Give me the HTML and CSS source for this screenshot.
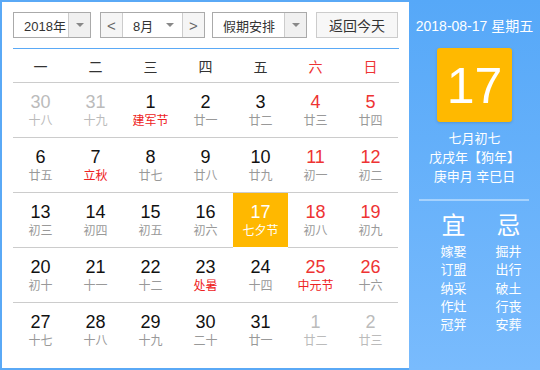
FILE: index.html
```html
<!DOCTYPE html>
<html lang="zh-CN">
<head>
  <meta charset="UTF-8" />
  <title>万年历</title>
  <link rel="stylesheet" href="styles.css">
</head>
<body>
  <div class="calendar">
    <div class="main">
      <div class="toolbar">
        <div class="select year">
          <span class="select-text">2018年</span>
          <span class="select-arrow"><i class="tri"></i></span>
        </div>
        <div class="select month">
          <span class="nav">&lt;</span>
          <span class="select-text">8月<i class="tri"></i></span>
          <span class="nav">&gt;</span>
        </div>
        <div class="select holiday">
          <span class="select-text">假期安排</span>
          <span class="select-arrow"><i class="tri"></i></span>
        </div>
        <button class="today-btn">返回今天</button>
      </div>

      <div class="weekdays">
        <span>一</span><span>二</span><span>三</span><span>四</span><span>五</span>
        <span class="weekend">六</span><span class="weekend">日</span>
      </div>

      <div class="days">
        <div class="day other"><b>30</b><small>十八</small></div>
        <div class="day other"><b>31</b><small>十九</small></div>
        <div class="day"><b>1</b><small class="fest">建军节</small></div>
        <div class="day"><b>2</b><small>廿一</small></div>
        <div class="day"><b>3</b><small>廿二</small></div>
        <div class="day weekend"><b>4</b><small>廿三</small></div>
        <div class="day weekend"><b>5</b><small>廿四</small></div>

        <div class="day"><b>6</b><small>廿五</small></div>
        <div class="day"><b>7</b><small class="fest">立秋</small></div>
        <div class="day"><b>8</b><small>廿七</small></div>
        <div class="day"><b>9</b><small>廿八</small></div>
        <div class="day"><b>10</b><small>廿九</small></div>
        <div class="day weekend"><b>11</b><small>初一</small></div>
        <div class="day weekend"><b>12</b><small>初二</small></div>

        <div class="day"><b>13</b><small>初三</small></div>
        <div class="day"><b>14</b><small>初四</small></div>
        <div class="day"><b>15</b><small>初五</small></div>
        <div class="day"><b>16</b><small>初六</small></div>
        <div class="day selected"><b>17</b><small>七夕节</small></div>
        <div class="day weekend"><b>18</b><small>初八</small></div>
        <div class="day weekend"><b>19</b><small>初九</small></div>

        <div class="day"><b>20</b><small>初十</small></div>
        <div class="day"><b>21</b><small>十一</small></div>
        <div class="day"><b>22</b><small>十二</small></div>
        <div class="day"><b>23</b><small class="fest">处暑</small></div>
        <div class="day"><b>24</b><small>十四</small></div>
        <div class="day weekend"><b>25</b><small class="fest">中元节</small></div>
        <div class="day weekend"><b>26</b><small>十六</small></div>

        <div class="day"><b>27</b><small>十七</small></div>
        <div class="day"><b>28</b><small>十八</small></div>
        <div class="day"><b>29</b><small>十九</small></div>
        <div class="day"><b>30</b><small>二十</small></div>
        <div class="day"><b>31</b><small>廿一</small></div>
        <div class="day other"><b>1</b><small>廿二</small></div>
        <div class="day other"><b>2</b><small>廿三</small></div>
      </div>
    </div>

    <div class="side">
      <div class="side-date">2018-08-17 星期五</div>
      <div class="big-day">17</div>
      <div class="lunar">
        <p>七月初七</p>
        <p>戊戌年【狗年】</p>
        <p>庚申月 辛巳日</p>
      </div>
      <div class="divider"></div>
      <div class="almanac">
        <div class="alm-col">
          <h3>宜</h3>
          <p>嫁娶</p><p>订盟</p><p>纳采</p><p>作灶</p><p>冠笄</p>
        </div>
        <div class="alm-col">
          <h3>忌</h3>
          <p>掘井</p><p>出行</p><p>破土</p><p>行丧</p><p>安葬</p>
        </div>
      </div>
    </div>
  </div>
</body>
</html>
```

FILE: styles.css
```css
* {
  box-sizing: border-box;
}

body {
  margin: 0;
  font-family: "Liberation Sans", "Noto Sans CJK SC", sans-serif;
  background: #fff;
}

.calendar {
  display: flex;
  width: 540px;
  height: 370px;
  border: 2px solid #5aa9f6;
  border-right: none;
}

.main {
  width: 407px;
  padding: 10px 10px 0 11px;
  background: #fff;
}

/* toolbar */
.toolbar {
  display: flex;
  height: 26px;
  font-size: 13px;
  color: #333;
  white-space: nowrap;
}

.select {
  display: flex;
  border: 1px solid #aaa;
  background: #fff;
}

.select-text {
  display: flex;
  align-items: center;
  flex: 1;
  min-width: 0;
  padding-left: 10px;
}

.select-arrow {
  display: flex;
  align-items: center;
  justify-content: center;
  width: 22px;
  border-left: 1px solid #ccc;
  background: #f0f0f0;
}

.tri {
  display: inline-block;
  width: 0;
  height: 0;
  border-left: 4px solid transparent;
  border-right: 4px solid transparent;
  border-top: 4px solid #888;
}

.year {
  width: 78px;
}

.month {
  width: 105px;
  margin-left: 9px;
}

.month .select-text {
  padding-left: 10px;
  justify-content: space-between;
  padding-right: 8px;
}

.nav {
  display: flex;
  align-items: center;
  justify-content: center;
  width: 22px;
  background: #f5f5f5;
  color: #666;
  font-size: 15px;
}

.nav:first-child {
  border-right: 1px solid #ccc;
}

.nav:last-child {
  border-left: 1px solid #ccc;
}

.holiday {
  width: 95px;
  margin-left: 7px;
}

.today-btn {
  width: 82px;
  margin-left: 9px;
  padding: 0;
  border: 1px solid #ccc;
  background: #f7f7f7;
  font-family: inherit;
  font-size: 14px;
  color: #333;
}

/* weekday header */
.weekdays {
  display: grid;
  grid-template-columns: repeat(7, 55px);
  height: 35px;
  margin-top: 10px;
  border-top: 1px solid #5aa9f6;
  border-bottom: 1px solid #ccc;
  font-size: 14px;
  color: #333;
}

.weekdays span {
  display: flex;
  align-items: center;
  justify-content: center;
}

.weekdays .weekend {
  color: #e33;
}

/* days grid */
.days {
  display: grid;
  grid-template-columns: repeat(7, 55px);
  grid-auto-rows: 55px;
}

.day {
  display: flex;
  flex-direction: column;
  align-items: center;
  padding-top: 8px;
  border-bottom: 1px solid #ccc;
}

.day:nth-last-child(-n+7) {
  border-bottom: none;
}

.day b {
  font-weight: normal;
  font-size: 18px;
  line-height: 22px;
  color: #111;
}

.day small {
  font-size: 12px;
  line-height: 17px;
  color: #999;
}

.day.weekend b {
  color: #e33;
}

.day small.fest {
  color: #e22;
}

.day.other b,
.day.other small {
  color: #bbb;
}

.day.selected {
  background: #ffb800;
  margin-bottom: 1px;
  border-bottom: none;
}

.day.selected b,
.day.selected small {
  color: #fff;
}

/* side panel */
.side {
  flex: 1;
  margin-top: -2px;
  margin-bottom: -2px;
  background: linear-gradient(#56a8f8, #79bbfd);
  color: #fff;
  text-align: center;
}

.side-date {
  padding-top: 16px;
  font-size: 14px;
  line-height: 20px;
}

.big-day {
  width: 75px;
  height: 74px;
  margin: 12px auto 0;
  border-radius: 3px;
  background: #ffb900;
  box-shadow: 0 1px 3px rgba(0, 0, 0, 0.15);
  font-size: 50px;
  line-height: 76px;
}

.lunar {
  margin-top: 7px;
  font-size: 13px;
  line-height: 19px;
}

.lunar p {
  margin: 0;
}

.divider {
  height: 2px;
  margin: 13px 11px 0 10px;
  background: #a6d2fd;
}

.almanac {
  display: grid;
  grid-template-columns: 55px 55px;
  padding-left: 17px;
  margin-top: 10px;
}

.alm-col h3 {
  margin: 0 0 2px;
  font-size: 24px;
  font-weight: normal;
  line-height: 30px;
}

.alm-col p {
  margin: 0;
  font-size: 13px;
  line-height: 18.3px;
}
```
